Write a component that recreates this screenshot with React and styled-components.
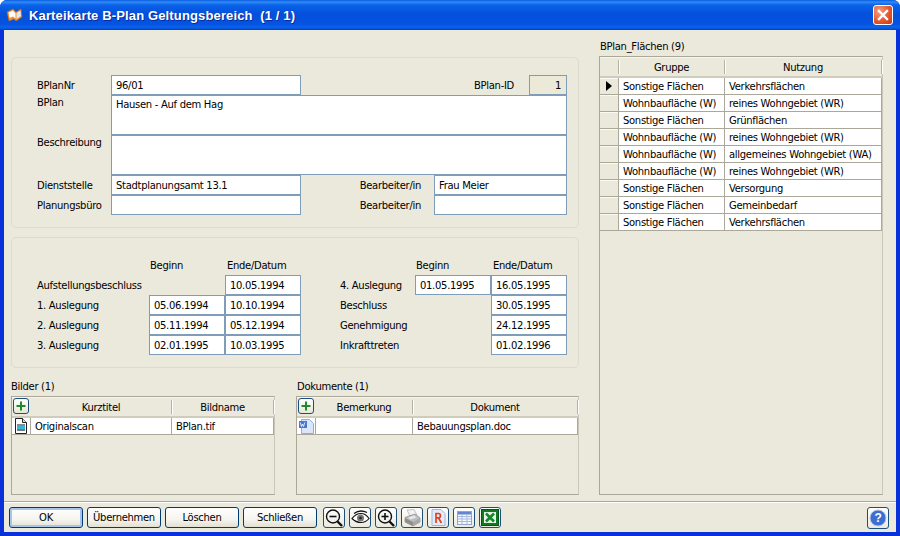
import React from "react";
import styled, { createGlobalStyle } from "styled-components";

const Global = createGlobalStyle`
  html, body { margin: 0; padding: 0; background: #fff; }
  body { font-family: "DejaVu Sans", "Liberation Sans", sans-serif; font-size: 10px; letter-spacing: -0.3px; color: #000; }
  * { box-sizing: border-box; }
`;

const Window = styled.div`
  width: 900px; height: 536px; display: flex; flex-direction: column;
  border-radius: 7px 7px 0 0; overflow: hidden; background: #0831d9;
`;
const TitleBar = styled.div`
  height: 30px; flex: none; display: flex; align-items: center; padding: 0 7px 0 6px; gap: 6px;
  background: linear-gradient(180deg, #0a5ae0 0, #2f8cf5 2px, #0a62e8 5px, #0450dc 14px, #0553e0 24px, #0a63ee 27px, #0450d8 29px, #033cc4 30px);
`;
const TitleText = styled.div`
  flex: 1; color: #fff; font: bold 13px "Liberation Sans", sans-serif; white-space: pre;
  letter-spacing: 0.14px; text-shadow: 1px 1px 0 #0a2a9a;
`;
const CloseBtn = styled.div`
  width: 20px; height: 20px; border-radius: 3px; border: 1px solid #fff; display: flex;
  align-items: center; justify-content: center;
  background: radial-gradient(circle at 30% 30%, #f0a080, #e2532b 60%, #c13a12);
`;
const Frame = styled.div`
  flex: 1; min-height: 0; display: flex; flex-direction: column; margin: 0 4px 4px;
  background: #ebe8dc;
`;
const Body = styled.div`
  height: 471px; flex: none; display: flex; padding-left: 7px;
`;
const LeftColumn = styled.div`
  width: 568px; padding-top: 27px; display: flex; flex-direction: column; gap: 9px;
`;
const RightColumn = styled.div`
  width: 284px; margin-left: 20px; padding-top: 9px; display: flex; flex-direction: column;
`;
const Panel = styled.div`
  border: 1px solid #dddccb; border-radius: 5px; padding: 17px 0 12px 25px;
`;
const MasterGrid = styled.div`
  display: grid; grid-template-columns: 74px 190px 133px 95px 38px; grid-auto-rows: 20px;
`;
const Label = styled.div`
  display: flex; align-items: ${p => p.$top ? "flex-start" : "center"};
  white-space: nowrap; line-height: 15px;
  ${p => p.$right && `justify-content: flex-end; padding-right: ${p.$right}px;`}
  ${p => p.$span && `grid-column: span ${p.$span};`}
`;
const Field = styled.div`
  border: 1px solid #7f9db9; background: ${p => p.$readonly ? "#ece9d8" : "#fff"};
  display: flex; align-items: ${p => p.$multi ? "flex-start" : "center"};
  justify-content: ${p => p.$readonly ? "flex-end" : "flex-start"};
  padding: ${p => p.$multi ? "1px 4px 0" : "0 4px"}; height: ${p => p.$multi ? "40px" : "20px"};
  ${p => p.$readonly && "padding-right: 5px;"}
  ${p => p.$multi && "line-height: 15px; grid-row: span 2; grid-column: span 4;"}
  ${p => p.$span && `grid-column: span ${p.$span};`}
  white-space: nowrap;
`;
const Dates = styled.div`display: flex; gap: 39px;`;
const DateGrid = styled.div`
  display: grid; grid-template-columns: ${p => p.$label}px 76px 76px; grid-auto-rows: 20px;
`;
const HeadLabel = styled.div`display: flex; align-items: center; padding-left: ${p => p.$pad}px; white-space: nowrap;`;
const Lower = styled.div`display: flex; gap: 21px; margin-top: 3px;`;
const Group = styled.div`width: ${p => p.$w}px; display: flex; flex-direction: column;`;
const GroupTitle = styled.div`
  height: ${p => p.$h || 16}px; line-height: 14px; padding: ${p => p.$h ? "1px" : "0"} 0 0 ${p => p.$pad || 0}px; white-space: nowrap;
`;
const Table = styled.div`
  border: 1px solid #aca899; border-right-color: #c9c7b8; height: ${p => p.$h}px; background: #ebe8dc;
`;
const Row = styled.div`display: grid; grid-template-columns: ${p => p.$cols};`;
const HeadRow = styled(Row)`height: 21px; border-bottom: 2px solid #cfccbc; box-shadow: inset 0 1px 0 #f6f5ee;`;
const HeadCell = styled.div`
  margin: 3px 0 2px; border-right: 1px solid #b4b2a4; box-shadow: 1px 0 0 #fff;
  display: flex; align-items: center; justify-content: center;
`;
const DataRow = styled(Row)`height: 17px; border-bottom: 1px solid #aca899;`;
const HandleCell = styled.div`
  background: #ebe8dc; border-right: 1px solid #aca899; box-shadow: inset 0 1px 0 #fbfaf5;
  display: flex; align-items: center; justify-content: center;
`;
const IconCell = styled(HandleCell)`background: #fff; box-shadow: none;`;
const Cell = styled.div`
  background: #fff; border-right: 1px solid #aca899; padding-left: 4px; line-height: 17px; white-space: nowrap; overflow: hidden;
`;
const AddBtn = styled.div`
  width: 16px; height: 16px; margin: 1px 0 0 1px; border: 1px solid #1b4f7e; border-radius: 3px;
  background: linear-gradient(#fff, #e8e6d8); display: flex; align-items: center; justify-content: center;
`;
const Footer = styled.div`
  flex: 1; border-top: 1px solid #aca899; box-shadow: inset 0 1px 0 #fff; display: flex;
  align-items: flex-start; padding: 5px 7px 0 5px;
`;
const Button = styled.div`
  width: 74px; height: 21px; margin-right: 4px; border: 1px solid #003c74; border-radius: 3px;
  display: flex; align-items: center; justify-content: center; white-space: nowrap;
  background: linear-gradient(#fff 0, #f5f4ee 60%, #e3e0d3 100%);
  ${p => p.$default && "box-shadow: inset 0 0 0 2px #a9c4ec;"}
`;
const ToolBtn = styled.div`
  width: 22px; height: 21px; margin-right: 4px; border: 1px solid #1b4f7e; border-radius: 3px;
  background: linear-gradient(#fff, #eceadf); display: flex; align-items: center; justify-content: center;
  ${p => p.$first && "margin-left: 2px;"}
`;
const HelpBtn = styled(ToolBtn)`margin: 0 0 0 auto; height: 22px;`;

const BookIcon = () => (
  <svg width="17" height="16" viewBox="0 0 17 16">
    <path d="M1 5l6-3 3 3 5-3 1 8-6 4-2-2-5 2z" fill="#f09030" stroke="#b86a18" strokeWidth=".6" />
    <path d="M2.5 5.5l4.5-2 2.5 3v5l-2.5-2-3.5 1.5z" fill="#fff" />
    <path d="M10.5 6l4-2.5.5 5.5-4.5 3z" fill="#dfe8f8" />
  </svg>
);
const CloseIcon = () => (
  <svg width="12" height="12" viewBox="0 0 12 12"><path d="M2 2l8 8M10 2l-8 8" stroke="#fff" strokeWidth="2.4" strokeLinecap="square" /></svg>
);
const Plus = () => (
  <svg width="12" height="12" viewBox="0 0 12 12"><path d="M6 1.5v9M1.5 6h9" stroke="#1d8a2c" strokeWidth="2" /></svg>
);
const ScanIcon = () => (
  <svg width="14" height="16" viewBox="0 0 14 16">
    <path d="M1.5.5h7l4 4v11h-11z" fill="#fff" stroke="#222" />
    <path d="M8.5.5v4h4" fill="#ddd" stroke="#222" />
    <rect x="3" y="6" width="8" height="2" fill="#8a8a8a" />
    <rect x="3" y="8" width="8" height="3" fill="#38b6d8" />
    <rect x="3" y="11" width="8" height="2" fill="#777" />
  </svg>
);
const WordIcon = () => (
  <svg width="16" height="15" viewBox="0 0 16 15">
    <path d="M3.5.5h8l4 4v10h-12z" fill="#dbe6fa" stroke="#8fabe0" />
    <rect x="1" y="2" width="8" height="7" fill="#4a78cc" />
    <path d="M2.2 3.5l1.3 4 1-2.500 1 2.500 1.300-4" fill="none" stroke="#fff" strokeWidth=".8" />
  </svg>
);
const Arrow = () => (
  <svg width="6" height="10" viewBox="0 0 6 10"><path d="M0 0l6 5-6 5z" fill="#000" /></svg>
);
const Magnifier = ({ plus }) => (
  <svg width="19" height="18" viewBox="0 0 19 18">
    <circle cx="8" cy="7.5" r="6.5" fill="none" stroke="#111" strokeWidth="1.4" />
    <path d="M4.5 7.5h7" stroke="#111" strokeWidth="1.6" />
    {plus && <path d="M8 4v7" stroke="#111" strokeWidth="1.6" />}
    <path d="M12.5 12.5l4.5 4.5" stroke="#111" strokeWidth="2.4" />
  </svg>
);
const EyeIcon = () => (
  <svg width="19" height="15" viewBox="0 0 19 15">
    <path d="M1 8.5c3-4 6-5 9-5s6 2 8 5c-2 2.500-5 4-8 4s-6-1-9-4z" fill="#fff" stroke="#111" strokeWidth="1.2" />
    <circle cx="9.500" cy="8" r="3.500" fill="#777" />
    <circle cx="9.500" cy="8" r="1.300" fill="#222" />
    <path d="M3 3.500C7 .5 12 .5 16 2.500" fill="none" stroke="#111" strokeWidth="1.300" />
  </svg>
);
const PrinterIcon = () => (
  <svg width="19" height="18" viewBox="0 0 19 18">
    <path d="M4 1l7-.5 3 5.500-7 1z" fill="#f2f2f2" stroke="#aaa" strokeWidth=".7" />
    <path d="M2 8.500l10-3.500 5 4v4l-7 4-8-4z" fill="#bdbdbd" stroke="#8a8a8a" strokeWidth=".7" />
    <path d="M2 9l8 4v4l-8-4z" fill="#8f8f8f" />
    <path d="M10 13l7-4v4l-7 4z" fill="#a8a8a8" />
    <path d="M5 8.500l6-2 2.500 2-6 2z" fill="#e8e8e8" />
  </svg>
);
const ReportIcon = () => (
  <svg width="15" height="17" viewBox="0 0 15 17">
    <path d="M1 .5h9l4 4v12H1z" fill="#e3ecfb" stroke="#9db6e0" />
    <path d="M5 14V4.500h2.600c2.400 0 2.400 4.300 0 4.300H5M7.500 9l3 5" fill="none" stroke="#e8401a" strokeWidth="1.700" />
  </svg>
);
const TableIcon = () => (
  <svg width="15" height="14" viewBox="0 0 15 14">
    <rect x=".5" y=".5" width="14" height="13" fill="#f4f6fc" stroke="#8fa6d4" />
    <rect x="1" y="1" width="13" height="2.500" fill="#6484cc" />
    <path d="M1 5.500h13M1 8h13M1 10.500h13M5 3.500v10M10 3.500v10" stroke="#a9bbdd" />
  </svg>
);
const ExcelIcon = () => (
  <svg width="18" height="17" viewBox="0 0 18 17">
    <rect x=".5" y=".5" width="17" height="16" fill="#0e7a22" stroke="#075414" />
    <rect x="3" y="3" width="12" height="11" fill="#e8f4e8" />
    <path d="M5 4.500l8 8M13 4.500l-8 8" stroke="#128a2a" strokeWidth="2.600" />
  </svg>
);
const HelpIcon = () => (
  <svg width="18" height="18" viewBox="0 0 18 18">
    <circle cx="9" cy="9" r="8" fill="#3d6fd0" stroke="#b6c6e6" />
    <text x="9" y="13" textAnchor="middle" fontFamily="Liberation Sans, sans-serif" fontWeight="bold" fontSize="12" fill="#fff">?</text>
  </svg>
);

const flaechen = [
  ["Sonstige Flächen", "Verkehrsflächen"],
  ["Wohnbaufläche (W)", "reines Wohngebiet (WR)"],
  ["Sonstige Flächen", "Grünflächen"],
  ["Wohnbaufläche (W)", "reines Wohngebiet (WR)"],
  ["Wohnbaufläche (W)", "allgemeines Wohngebiet (WA)"],
  ["Wohnbaufläche (W)", "reines Wohngebiet (WR)"],
  ["Sonstige Flächen", "Versorgung"],
  ["Sonstige Flächen", "Gemeinbedarf"],
  ["Sonstige Flächen", "Verkehrsflächen"],
];

const datesLeft = [
  ["Aufstellungsbeschluss", "", "10.05.1994"],
  ["1. Auslegung", "05.06.1994", "10.10.1994"],
  ["2. Auslegung", "05.11.1994", "05.12.1994"],
  ["3. Auslegung", "02.01.1995", "10.03.1995"],
];
const datesRight = [
  ["4. Auslegung", "01.05.1995", "16.05.1995"],
  ["Beschluss", "", "30.05.1995"],
  ["Genehmigung", "", "24.12.1995"],
  ["Inkrafttreten", "", "01.02.1996"],
];

const DateBlock = ({ rows, label }) => (
  <DateGrid $label={label}>
    <span />
    <HeadLabel $pad={1}>Beginn</HeadLabel>
    <HeadLabel $pad={2}>Ende/Datum</HeadLabel>
    {rows.map(([name, a, b]) => (
      <React.Fragment key={name}>
        <Label>{name}</Label>
        {a ? <Field>{a}</Field> : <span />}
        <Field>{b}</Field>
      </React.Fragment>
    ))}
  </DateGrid>
);

const SmallTable = ({ cols, h1, h2, icon, c1, c2 }) => (
  <Table $h={99}>
    <HeadRow $cols={cols}>
      <AddBtn><Plus /></AddBtn>
      <HeadCell>{h1}</HeadCell>
      <HeadCell>{h2}</HeadCell>
    </HeadRow>
    <DataRow $cols={cols}>
      <IconCell>{icon}</IconCell>
      <Cell>{c1}</Cell>
      <Cell>{c2}</Cell>
    </DataRow>
  </Table>
);

export default function App() {
  return (
    <>
      <Global />
      <Window>
        <TitleBar>
          <BookIcon />
          <TitleText>{"Karteikarte B-Plan Geltungsbereich  (1 / 1)"}</TitleText>
          <CloseBtn><CloseIcon /></CloseBtn>
        </TitleBar>
        <Frame>
          <Body>
            <LeftColumn>
              <Panel>
                <MasterGrid>
                  <Label>BPlanNr</Label>
                  <Field>96/01</Field>
                  <Label $span={2} $right={15}>BPlan-ID</Label>
                  <Field $readonly>1</Field>
                  <Label $top>BPlan</Label>
                  <Field $multi>Hausen - Auf dem Hag</Field>
                  <span />
                  <Label $top>Beschreibung</Label>
                  <Field $multi />
                  <span />
                  <Label>Dienststelle</Label>
                  <Field>Stadtplanungsamt 13.1</Field>
                  <Label $right={13}>Bearbeiter/in</Label>
                  <Field $span={2}>Frau Meier</Field>
                  <Label>Planungsbüro</Label>
                  <Field />
                  <Label $right={13}>Bearbeiter/in</Label>
                  <Field $span={2} />
                </MasterGrid>
              </Panel>
              <Panel>
                <Dates>
                  <DateBlock rows={datesLeft} label={112} />
                  <DateBlock rows={datesRight} label={75} />
                </Dates>
              </Panel>
              <Lower>
                <Group $w={264}>
                  <GroupTitle>Bilder (1)</GroupTitle>
                  <SmallTable cols="19px 141px 102px" h1="Kurztitel" h2="Bildname" icon={<ScanIcon />} c1="Originalscan" c2="BPlan.tif" />
                </Group>
                <Group $w={283}>
                  <GroupTitle $pad={1}>Dokumente (1)</GroupTitle>
                  <SmallTable cols="19px 97px 165px" h1="Bemerkung" h2="Dokument" icon={<WordIcon />} c1="" c2="Bebauungsplan.doc" />
                </Group>
              </Lower>
            </LeftColumn>
            <RightColumn>
              <GroupTitle $pad={1} $h={17}>BPlan_Flächen (9)</GroupTitle>
              <Table $h={439}>
                <HeadRow $cols="19px 106px 157px">
                  <HeadCell />
                  <HeadCell>Gruppe</HeadCell>
                  <HeadCell>Nutzung</HeadCell>
                </HeadRow>
                {flaechen.map(([g, n], i) => (
                  <DataRow key={i} $cols="19px 106px 157px">
                    <HandleCell>{i === 0 && <Arrow />}</HandleCell>
                    <Cell>{g}</Cell>
                    <Cell>{n}</Cell>
                  </DataRow>
                ))}
              </Table>
            </RightColumn>
          </Body>
          <Footer>
            <Button $default>OK</Button>
            <Button>Übernehmen</Button>
            <Button>Löschen</Button>
            <Button>Schließen</Button>
            <ToolBtn $first><Magnifier /></ToolBtn>
            <ToolBtn><EyeIcon /></ToolBtn>
            <ToolBtn><Magnifier plus /></ToolBtn>
            <ToolBtn><PrinterIcon /></ToolBtn>
            <ToolBtn><ReportIcon /></ToolBtn>
            <ToolBtn><TableIcon /></ToolBtn>
            <ToolBtn><ExcelIcon /></ToolBtn>
            <HelpBtn><HelpIcon /></HelpBtn>
          </Footer>
        </Frame>
      </Window>
    </>
  );
}
